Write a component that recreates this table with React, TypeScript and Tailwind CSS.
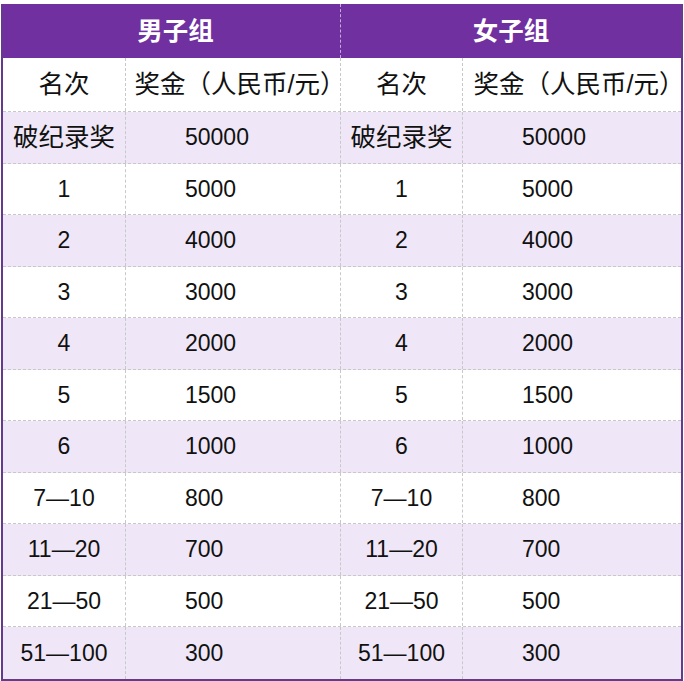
const rows = [
  ["破纪录奖", "50000"],
  ["1", "5000"],
  ["2", "4000"],
  ["3", "3000"],
  ["4", "2000"],
  ["5", "1500"],
  ["6", "1000"],
  ["7—10", "800"],
  ["11—20", "700"],
  ["21—50", "500"],
  ["51—100", "300"],
];

const font = "font-['Liberation_Sans','Noto_Sans_CJK_SC',sans-serif]";
const line = "border-dashed border-[#c8c8c8]";

export default function App() {
  return (
    <div className={`bg-white w-[684px] h-[681px] pt-1 pl-px ${font} text-[23px] text-[#111]`}>
      <div className="w-[682px] border-x-2 border-b-2 border-[#643a8c]">
        {/* group header */}
        <div className="grid grid-cols-[338px_1fr] h-[54px] bg-[#7030a0] text-white font-bold text-[25.5px]">
          <div className="flex items-center justify-center pl-2 border-r border-dashed border-[#c9a9e0]">
            男子组
          </div>
          <div className="flex items-center justify-center">女子组</div>
        </div>

        {/* column titles */}
        <div className={`grid grid-cols-[123px_215px_122px_1fr] h-[54px] bg-white text-[25.5px] border-b ${line}`}>
          <div className={`flex items-center justify-center border-r ${line}`}>名次</div>
          <div className={`flex items-center justify-center border-r ${line}`}>
            <span className="whitespace-nowrap -mr-[14px]">奖金（人民币/元）</span>
          </div>
          <div className={`flex items-center justify-center border-r ${line}`}>名次</div>
          <div className="flex items-center justify-center">
            <span className="whitespace-nowrap -mr-[14px]">奖金（人民币/元）</span>
          </div>
        </div>

        {rows.map(([rank, prize], i) => {
          const cjk = i === 0 ? "text-[25.5px]" : "";
          return (
            <div
              key={rank}
              className={`grid grid-cols-[123px_215px_122px_1fr] h-[51.5px] ${
                i % 2 === 0 ? "bg-[#efe7f7]" : "bg-white"
              } ${i < rows.length - 1 ? `border-b ${line}` : ""}`}
            >
              <div className={`flex items-center justify-center border-r ${line} ${cjk}`}>{rank}</div>
              <div className={`flex items-center pl-[59px] border-r ${line}`}>{prize}</div>
              <div className={`flex items-center justify-center border-r ${line} ${cjk}`}>{rank}</div>
              <div className="flex items-center pl-[59px]">{prize}</div>
            </div>
          );
        })}
      </div>
    </div>
  );
}
